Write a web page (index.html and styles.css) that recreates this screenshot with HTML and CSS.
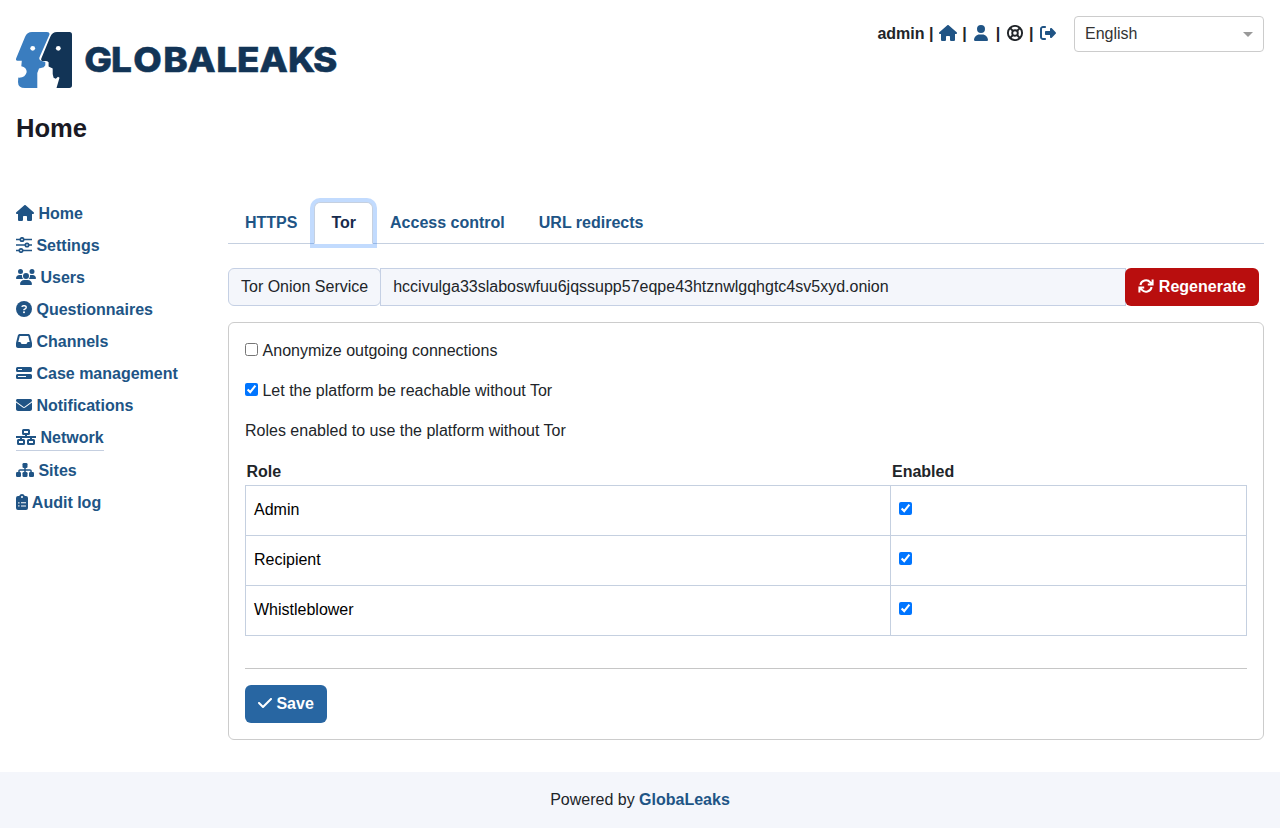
FILE: index.html
```html
<!DOCTYPE html>
<html lang="en">
<head>
<meta charset="utf-8">
<title>GlobaLeaks - Network</title>
<link rel="stylesheet" href="styles.css">
</head>
<body>
<svg class="defs" aria-hidden="true">
  <symbol id="house" viewBox="0 0 576 512"><path d="M575.8 255.5c0 18-15 32.1-32 32.1h-32l.7 160.2c0 2.7-.2 5.4-.5 8.1V472c0 22.1-17.9 40-40 40H456c-1.1 0-2.2 0-3.3-.1c-1.4 .1-2.8 .1-4.2 .1H416 392c-22.1 0-40-17.9-40-40V448 384c0-17.7-14.3-32-32-32H256c-17.7 0-32 14.3-32 32v64 24c0 22.1-17.9 40-40 40H160 128.1c-1.5 0-3-.1-4.5-.2c-1.2 .1-2.4 .2-3.6 .2H104c-22.1 0-40-17.9-40-40V360c0-.9 0-1.9 .1-2.8V287.6H32c-18 0-32-14-32-32.1c0-9 3-17 10-24L266.4 8c7-7 15-8 22-8s15 2 21 7L564.8 231.5c8 7 12 15 11 24z"/></symbol>
</svg>
<header class="header">
  <svg class="logo" width="322" height="58" viewBox="0 0 322 58" role="img" aria-label="GlobaLeaks">
    <path class="face-light" d="M16 0H31Q34.300 0 33.300 3L23.600 25Q22.500 28 25 28.700L29.300 30V33.300L27.700 35.300 23 36.400 21.300 41V56H9Q2 56 2 50L2.300 45.600Q9.500 46 10.700 40 10.700 35.500 5.300 34.300L5.800 28.700H1.500Q-.6 28.500 .2 26.300L9 5Q11 0 16 0z"/>
    <path class="face-dark" d="M41 0H53.500Q56 0 56 2.700V53.300Q56 56 53.300 56H40.500L43.500 45.800 42 44.800 39.800 46.800 37.600 45.800 36.700 42V36.500L32.600 34.600V30.300Q31 28.600 29.200 29H26.300Q24.500 28.800 25.200 26.800L34.200 5Q36.200 0 41 0z"/>
    <circle cx="16.700" cy="16.300" r="2.400" class="hand"/><circle cx="42.300" cy="16.300" r="2.400" class="hand"/>
    <text class="wordmark" y="40.400" transform="scale(1.07 1)" x="63.900 88.800 109.500 137.600 160 187.200 206.600 227.500 254.200 277.500">GLOBALEAKS</text>
  </svg>
  <div class="tools">
    <div class="session"><span>admin | </span><a><svg class="icon fw"><use href="#house"/></svg></a><span> | </span><a><svg class="icon fw" viewBox="0 0 448 512"><path d="M224 256A128 128 0 1 0 224 0a128 128 0 1 0 0 256zm-45.700 48C79.800 304 0 383.800 0 482.300C0 498.700 13.300 512 29.700 512H418.300c16.400 0 29.700-13.300 29.700-29.700C448 383.800 368.200 304 269.700 304H178.300z"/></svg></a><span> | </span><svg class="icon fw line" viewBox="0 0 16 16"><circle cx="8" cy="8" r="7.100"/><circle cx="8" cy="8" r="2.800"/><path d="m3.200 3.200 2.800 2.800M10 10l2.800 2.800M12.800 3.200 10 6M6 10l-2.800 2.800"/></svg><span> | </span><a><svg class="icon fw" viewBox="0 0 512 512"><path d="M377.900 105.900L500.700 228.700c7.200 7.200 11.300 17.100 11.300 27.300s-4.100 20.100-11.300 27.300L377.900 406.100c-6.400 6.400-15 9.900-24 9.900c-18.700 0-33.900-15.200-33.900-33.900l0-62.100-128 0c-17.700 0-32-14.300-32-32l0-64c0-17.700 14.300-32 32-32l128 0 0-62.100c0-18.700 15.200-33.900 33.900-33.900c9 0 17.600 3.600 24 9.900zM160 96L96 96c-17.700 0-32 14.300-32 32l0 256c0 17.700 14.300 32 32 32l64 0c17.700 0 32 14.300 32 32s-14.300 32-32 32l-64 0c-53 0-96-43-96-96L0 128C0 75 43 32 96 32l64 0c17.700 0 32 14.300 32 32s-14.300 32-32 32z"/></svg></a></div>
    <div class="language"><span>English</span><i class="caret"></i></div>
  </div>
</header>
<h1 class="title">Home</h1>
<div class="layout">
  <nav class="sidebar">
    <a><svg class="icon w18"><use href="#house"/></svg> Home</a>
    <a><svg class="icon line thin" viewBox="0 0 16 16"><path d="M0 2.500h4.200M8 2.500h8M0 8h9M13 8h3M0 13.500h3.200M7 13.500h9"/><circle cx="6" cy="2.500" r="1.700"/><circle cx="11" cy="8" r="1.700"/><circle cx="5" cy="13.500" r="1.700"/></svg> Settings</a>
    <a><svg class="icon w20" viewBox="0 0 640 512"><path d="M144 0a80 80 0 1 1 0 160A80 80 0 1 1 144 0zM512 0a80 80 0 1 1 0 160A80 80 0 1 1 512 0zM0 298.700C0 239.800 47.800 192 106.700 192h42.700c15.900 0 31 3.500 44.600 9.700c-1.300 7.200-1.900 14.700-1.900 22.300c0 38.200 16.800 72.500 43.300 96H21.300C9.600 320 0 310.400 0 298.700zM405.300 320h-.7c26.600-23.500 43.300-57.800 43.300-96c0-7.600-.7-15-1.900-22.300c13.600-6.300 28.700-9.700 44.600-9.700h42.700C592.200 192 640 239.800 640 298.700c0 11.800-9.600 21.300-21.300 21.300H405.300zM224 224a96 96 0 1 1 192 0 96 96 0 1 1-192 0zM128 485.300C128 411.700 187.700 352 261.300 352H378.700C452.300 352 512 411.700 512 485.300c0 14.700-11.900 26.700-26.700 26.700H154.700c-14.700 0-26.700-11.900-26.700-26.700z"/></svg> Users</a>
    <a><svg class="icon" viewBox="0 0 16 16"><circle cx="8" cy="8" r="8"/><path class="cut" d="M5.900 5.900c.2-.9.900-1.200 1.700-1.200h.9c2 0 2.300 2.400.7 3.200L8 8.600v.7"/><circle cx="8" cy="11.200" r="1" fill="#fff"/></svg> Questionnaires</a>
    <a><svg class="icon" viewBox="0 0 512 512"><path fill-rule="evenodd" d="M121 32C91.600 32 66 52 58.900 80.500L1.900 308.400C.6 313.500 0 318.700 0 323.900V416c0 35.300 28.700 64 64 64H448c35.300 0 64-28.700 64-64V323.900c0-5.200-.6-10.400-1.900-15.500l-57-227.900C446 52 420.400 32 391 32H121zm0 64H391l48 192H387.800c-12.100 0-23.200 6.800-28.600 17.700l-14.300 28.600c-5.400 10.800-16.500 17.700-28.600 17.700H195.800c-12.100 0-23.200-6.800-28.600-17.700l-14.300-28.600c-5.400-10.800-16.500-17.700-28.600-17.700H73L121 96z"/></svg> Channels</a>
    <a><svg class="icon" viewBox="0 0 16 16"><path fill-rule="evenodd" d="M1.500 2h13A1.500 1.500 0 0 1 16 3.500v2A1.500 1.500 0 0 1 14.500 7h-13A1.500 1.500 0 0 1 0 5.500v-2A1.500 1.500 0 0 1 1.500 2zM2 4v1h4V4zM1.500 9h13a1.500 1.500 0 0 1 1.500 1.500v2a1.500 1.500 0 0 1-1.500 1.500h-13A1.500 1.500 0 0 1 0 12.500v-2A1.500 1.500 0 0 1 1.500 9zM2 11v1h8v-1z"/></svg> Case management</a>
    <a><svg class="icon" viewBox="0 0 512 512"><path d="M48 64C21.500 64 0 85.500 0 112c0 15.100 7.100 29.300 19.200 38.400L236.800 313.600c11.400 8.500 27 8.500 38.400 0L492.800 150.400c12.100-9.100 19.200-23.300 19.200-38.400c0-26.500-21.500-48-48-48H48zM0 176V384c0 35.300 28.700 64 64 64H448c35.300 0 64-28.700 64-64V176L294.400 339.200c-22.800 17.100-54 17.100-76.800 0L0 176z"/></svg> Notifications</a>
    <a class="current"><svg class="icon w20 line net" viewBox="0 0 20 16"><rect x="7" y="1" width="6" height="4" rx=".5"/><rect x="2" y="11" width="6" height="4" rx=".5"/><rect x="12" y="11" width="6" height="4" rx=".5"/><path d="M10 5v3M5 8v3M15 8v3M0 8h20"/></svg> Network</a>
    <a><svg class="icon w18" viewBox="0 0 18 16"><rect x="6.500" y="1" width="5" height="5" rx="1.300"/><rect x="0" y="10" width="5" height="5" rx="1.300"/><rect x="6.500" y="10" width="5" height="5" rx="1.300"/><rect x="13" y="10" width="5" height="5" rx="1.300"/><path d="M8.250 5h1.500v2.250H14c1 0 1.800.8 1.800 1.800V11h-1.500V8.750H9.750V11h-1.500V8.750H3.750V11h-1.500V9.050c0-1 .8-1.800 1.800-1.800h4.200z"/></svg> Sites</a>
    <a><svg class="icon w12" viewBox="0 0 12 16"><path fill-rule="evenodd" d="M6 0a3 3 0 0 0-2.800 2H2a2 2 0 0 0-2 2v10a2 2 0 0 0 2 2h8a2 2 0 0 0 2-2V4a2 2 0 0 0-2-2H8.800A3 3 0 0 0 6 0zm0 2a1 1 0 1 1 0 2 1 1 0 1 1 0-2zM2.200 8.200v1.300h1.300V8.200zM5 8.300v1h5v-1zM2.200 11.300v1.300h1.300v-1.300zM5 11.500v1h5v-1z"/></svg> Audit log</a>
  </nav>
  <main class="content">
    <div class="tabs"><a>HTTPS</a><a class="active">Tor</a><a>Access control</a><a>URL redirects</a></div>
    <div class="onion">
      <span class="onion-label">Tor Onion Service</span>
      <span class="onion-value">hccivulga33slaboswfuu6jqssupp57eqpe43htznwlgqhgtc4sv5xyd.onion</span>
      <button class="button danger"><svg class="icon sync" viewBox="0 0 16 16"><path d="M2.400 7A5.700 5.700 0 0 1 12.300 4.300l1.600 1.700M13.600 9A5.700 5.700 0 0 1 3.700 11.700l-1.600-1.700M14.600 1.500v5H9.800M1.400 14.500v-5h4.800"/></svg> Regenerate</button>
    </div>
    <section class="card">
      <label class="option first"><input type="checkbox"> Anonymize outgoing connections</label>
      <label class="option"><input type="checkbox" checked> Let the platform be reachable without Tor</label>
      <div class="option">Roles enabled to use the platform without Tor</div>
      <table class="roles">
        <thead><tr><th class="role">Role</th><th class="enabled">Enabled</th></tr></thead>
        <tbody>
          <tr><td>Admin</td><td><input type="checkbox" checked></td></tr>
          <tr><td>Recipient</td><td><input type="checkbox" checked></td></tr>
          <tr><td>Whistleblower</td><td><input type="checkbox" checked></td></tr>
        </tbody>
      </table>
      <hr class="rule">
      <button class="button primary"><svg class="icon w14" viewBox="0 0 448 512"><path d="M438.600 105.400c12.500 12.500 12.500 32.800 0 45.300l-256 256c-12.500 12.500-32.800 12.500-45.300 0l-128-128c-12.500-12.500-12.500-32.800 0-45.300s32.800-12.500 45.300 0L160 338.700 393.400 105.400c12.500-12.500 32.800-12.500 45.300 0z"/></svg> Save</button>
    </section>
  </main>
</div>
<footer class="footer">Powered by&nbsp;<a>GlobaLeaks</a></footer>
</body>
</html>
```

FILE: styles.css
```css
* { box-sizing: border-box; }
body {
  margin: 0;
  min-height: 828px;
  display: flex;
  flex-direction: column;
  background: #fff;
  color: #212529;
  font: 16px/24px "Liberation Sans", Arial, sans-serif;
}
a { color: #205485; font-weight: bold; }
.defs { display: none; }
.icon { width: 16px; height: 16px; vertical-align: -2px; fill: currentColor; }
.fw, .w20 { width: 20px; }
.w18 { width: 18px; }
.w14 { width: 14px; }
.w12 { width: 12px; }
.icon.line { fill: none; stroke: currentColor; stroke-width: 1.900; }
.icon.thin { stroke-width: 1.700; }
.icon.net { stroke-width: 2; }
.cut { fill: none; stroke: #fff; stroke-width: 1.500; }
.header { display: flex; justify-content: space-between; padding: 16px 16px 0; height: 113px; }
.logo { margin-top: 16px; }
.face-light { fill: #3a7dbf; }
.face-dark { fill: #123456; }
.hand { fill: #fff; }
.wordmark { fill: #123456; stroke: #123456; stroke-width: .5px; font: 800 34.500px Inter, sans-serif; }
.tools { display: flex; gap: 16px; }
.session { padding-top: 6px; white-space: pre; font-weight: bold; }
.language {
  display: flex;
  align-items: center;
  justify-content: space-between;
  width: 190px;
  height: 36px;
  padding: 0 10px;
  border: 1px solid #ccc;
  border-radius: 4px;
  color: #333;
}
.caret { border: 5px solid transparent; border-top-color: #999; border-bottom: 0; }
.title { margin: 0; padding-left: 16px; font-size: 25.600px; line-height: 30px; color: #1a1a24; }
.layout { display: flex; padding: 54px 16px 0; }
.sidebar { width: 212px; display: flex; flex-direction: column; align-items: flex-start; gap: 8px; padding-top: 5px; }
.sidebar .current { border-bottom: 1px solid #c5cfe0; }
.content { flex: 1; padding-top: 5px; }
.tabs { display: flex; border-bottom: 1px solid #c5d0e0; }
.tabs a { margin-bottom: -1px; padding: 8px 16px; border: 1px solid transparent; }
.tabs .active {
  position: relative;
  background: #fff;
  color: #172b4d;
  border-color: #c5d0e0 #c5d0e0 #fff;
  border-radius: 6px 6px 0 0;
  box-shadow: 0 0 0 4px rgba(13, 110, 253, .25);
}
.onion { display: flex; margin: 24px 5px 16px 0; height: 38px; }
.onion-label, .onion-value { padding: 6px 12px; background: #f4f6fb; border: 1px solid #c5d0e4; }
.onion-label { border-radius: 6px; }
.onion-value { flex: 1; margin: 0 -1px; }
.button {
  height: 38px;
  padding: 6px 12px;
  border: 1px solid transparent;
  border-radius: 6px;
  color: #fff;
  font: bold 16px/24px "Liberation Sans", Arial, sans-serif;
}
.danger { position: relative; background: #b90e0e; }
.primary { background: #2866a2; }
.icon.sync { fill: none; stroke: currentColor; stroke-width: 2; }
.card { height: 418px; padding: 16px; border: 1px solid #ccc; border-radius: 6px; }
.option { display: block; margin-bottom: 16px; }
.option.first input { margin-right: 1px; }
input { width: 13px; height: 13px; margin: 0; }
.roles { width: 100%; border-collapse: collapse; table-layout: fixed; margin-bottom: 32px; }
.roles th { padding: 1px 1px 0; height: 26px; text-align: left; }
.roles th.role { width: 645px; }
.roles th.enabled { padding-left: 1.500px; }
.roles td { height: 50px; padding: 8px; border: 1px solid #c5d0e0; color: #000; vertical-align: middle; line-height: 24px; }
.rule { margin: 0 0 16px; border: 0; border-top: 1px solid #c6c6c6; }
.footer { display: flex; justify-content: center; align-items: center; height: 56px; margin-top: auto; background: #f4f6fb; }
```
